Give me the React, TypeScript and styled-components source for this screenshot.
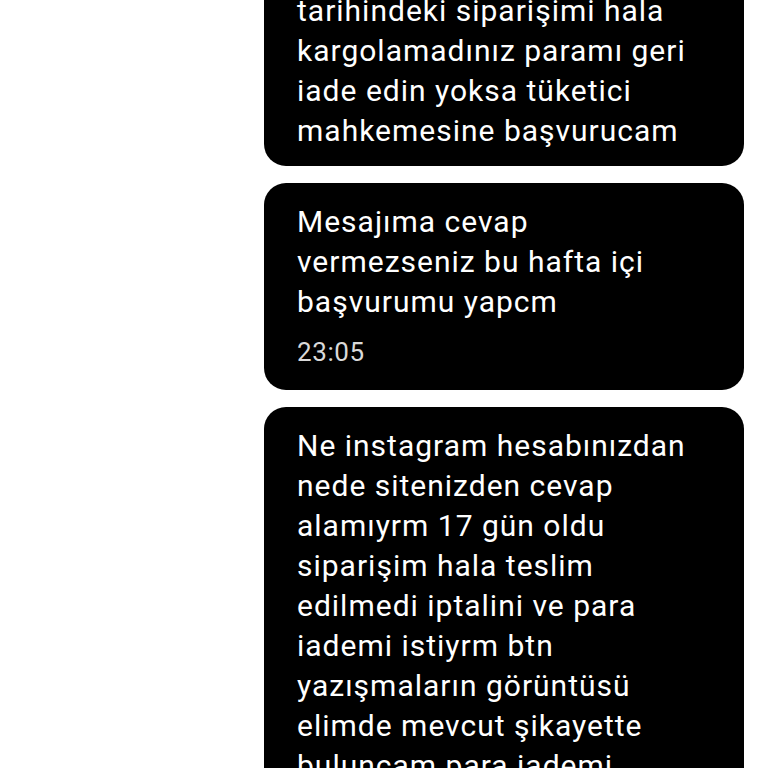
import React from 'react';
import styled, { createGlobalStyle } from 'styled-components';

type Message = {
  id: number;
  lines: string[];
  time?: string;
};

const messages: Message[] = [
  {
    id: 1,
    lines: [
      'Merhaba 2 Mart',
      'tarihindeki siparişimi hala',
      'kargolamadınız paramı geri',
      'iade edin yoksa tüketici',
      'mahkemesine başvurucam',
    ],
  },
  {
    id: 2,
    lines: ['Mesajıma cevap', 'vermezseniz bu hafta içi', 'başvurumu yapcm'],
    time: '23:05',
  },
  {
    id: 3,
    lines: [
      'Ne instagram hesabınızdan',
      'nede sitenizden cevap',
      'alamıyrm 17 gün oldu',
      'siparişim hala teslim',
      'edilmedi iptalini ve para',
      'iademi istiyrm btn',
      'yazışmaların görüntüsü',
      'elimde mevcut şikayette',
      'bulunçam para iademi',
      'yapılmazsa',
    ],
    time: '23:12',
  },
];

const App = () => {
  return (
    <>
      <GlobalStyle />
      <Screen>
        <Thread>
          {messages.map((m) => (
            <Bubble key={m.id} $hasTime={!!m.time}>
              {m.lines.map((line, i) => (
                <Line key={i}>{line}</Line>
              ))}
              {m.time && <Time>{m.time}</Time>}
            </Bubble>
          ))}
        </Thread>
      </Screen>
    </>
  );
};

export default App;

const GlobalStyle = createGlobalStyle`
  html, body {
    margin: 0;
    padding: 0;
    background: #ffffff;
  }
`;

const Screen = styled.div`
  width: 768px;
  height: 768px;
  overflow: hidden;

  background: #ffffff;
  font-family: Roboto, 'Noto Sans', sans-serif;
`;

const Thread = styled.div`
  display: flex;
  flex-direction: column;
  align-items: flex-end;
  gap: 17px;

  margin-top: -68px;
  padding-right: 24px;
`;

const Bubble = styled.div<{ $hasTime: boolean }>`
  box-sizing: border-box;
  width: 480px;
  padding: 19px 20px ${(p) => (p.$hasTime ? '20px' : '15px')} 33px;

  background: #000000;
  border-radius: 22px;
`;

const Line = styled.div`
  font-size: 30px;
  line-height: 40px;
  font-weight: 400;
  letter-spacing: 1px;
  white-space: nowrap;

  color: #ffffff;
`;

const Time = styled.div`
  margin-top: 12px;

  font-size: 26px;
  line-height: 36px;
  letter-spacing: 0.6px;

  color: #d9d9d9;
`;
